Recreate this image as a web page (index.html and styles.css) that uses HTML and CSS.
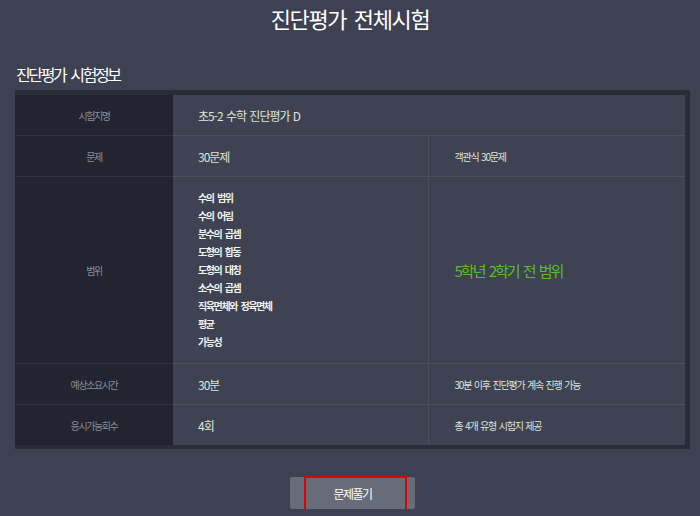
FILE: index.html
```html
<!DOCTYPE html>
<html lang="ko">
<head>
    <meta charset="UTF-8">
    <meta name="viewport" content="width=device-width, initial-scale=1.0">
    <title>진단평가 전체시험</title>
    <link rel="stylesheet" href="styles.css">
</head>
<body>
    <div class="page">
        <h1 class="page-title">진단평가 전체시험</h1>

        <h2 class="section-title">진단평가 시험정보</h2>

        <div class="info-box">
            <table class="info-table">
                <colgroup>
                    <col class="col-label">
                    <col class="col-value">
                    <col>
                </colgroup>
                <tr>
                    <th>시험지명</th>
                    <td class="value" colspan="2">초5-2 수학 진단평가 D</td>
                </tr>
                <tr>
                    <th>문제</th>
                    <td class="value">30문제</td>
                    <td class="note">객관식 30문제</td>
                </tr>
                <tr>
                    <th>범위</th>
                    <td class="value">
                        <ul class="range-list">
                            <li>수의 범위</li>
                            <li>수의 어림</li>
                            <li>분수의 곱셈</li>
                            <li>도형의 합동</li>
                            <li>도형의 대칭</li>
                            <li>소수의 곱셈</li>
                            <li>직육면체와 정육면체</li>
                            <li>평균</li>
                            <li>가능성</li>
                        </ul>
                    </td>
                    <td class="note"><span class="highlight">5학년 2학기 전 범위</span></td>
                </tr>
                <tr>
                    <th>예상소요시간</th>
                    <td class="value">30분</td>
                    <td class="note">30분 이후 진단평가 계속 진행 가능</td>
                </tr>
                <tr class="last">
                    <th>응시가능회수</th>
                    <td class="value">4회</td>
                    <td class="note">총 4개 유형 시험지 제공</td>
                </tr>
            </table>
        </div>

        <div class="actions">
            <button class="btn-start">문제풀기<span class="mark"></span></button>
        </div>
    </div>
</body>
</html>
```

FILE: styles.css
```css
body {
    margin: 0;
    padding: 0;
    background-color: #3d4151;
    font-family: "Noto Sans CJK KR", "Noto Sans", sans-serif;
    color: #dfe5da;
}
.page {
    width: 700px;
}
.page-title {
    margin: 0;
    padding-top: 3px;
    height: 36px;
    font-size: 22px;
    line-height: 30px;
    font-weight: 400;
    letter-spacing: -1.4px;
    word-spacing: 3px;
    text-align: center;
    color: #ffffff;
}
.section-title {
    margin: 24px 0 0 16px;
    font-size: 16px;
    line-height: 22px;
    font-weight: 400;
    letter-spacing: -2.4px;
    word-spacing: 3px;
    color: #ffffff;
    height: 27px;
}
.info-box {
    margin: 0 10px 0 15px;
    padding: 5px 5px 4px 0;
    background-color: #2a2c37;
}
.info-table {
    width: 100%;
    border-collapse: collapse;
    table-layout: fixed;
}
.col-label {
    width: 158px;
}
.col-value {
    width: 255px;
}
.info-table th {
    height: 40px;
    padding: 0;
    background-color: #22252f;
    border-bottom: 1px solid #30333e;
    font-size: 10px;
    font-weight: 400;
    letter-spacing: -1.4px;
    color: #8b8e9a;
    text-align: center;
    vertical-align: middle;
}
.info-table td {
    height: 40px;
    padding: 0 0 0 25px;
    background-color: #3e4252;
    border-bottom: 1px solid #4b4f5e;
    vertical-align: middle;
    text-align: left;
}
.info-table tr.last th,
.info-table tr.last td {
    border-bottom: none;
}
.info-table .value {
    font-size: 12px;
    letter-spacing: -1px;
    word-spacing: 1px;
}
.info-table .note {
    padding-left: 26px;
    border-left: 1px solid #4b4f5e;
    font-size: 10px;
    letter-spacing: -1.2px;
    word-spacing: 1px;
}
.range-list {
    list-style: none;
    margin: 0;
    padding: 12px 0;
}
.range-list li {
    font-size: 10px;
    line-height: 18px;
    font-weight: 700;
    letter-spacing: -1.4px;
    word-spacing: 2px;
    color: #f2f4f0;
}
.highlight {
    font-size: 15px;
    letter-spacing: -2px;
    word-spacing: 2px;
    color: #5cbc2e;
}
.actions {
    padding-top: 28px;
    padding-left: 290px;
}
.btn-start {
    position: relative;
    width: 125px;
    height: 32px;
    padding: 0;
    border: none;
    border-radius: 2px;
    background-color: #686b78;
    font-family: "Noto Sans CJK KR", "Noto Sans", sans-serif;
    font-size: 12px;
    letter-spacing: -1.5px;
    color: #ffffff;
}
.btn-start .mark {
    position: absolute;
    left: 14px;
    top: -1px;
    width: 99px;
    height: 31px;
    border: 2px solid #e00000;
}
```
